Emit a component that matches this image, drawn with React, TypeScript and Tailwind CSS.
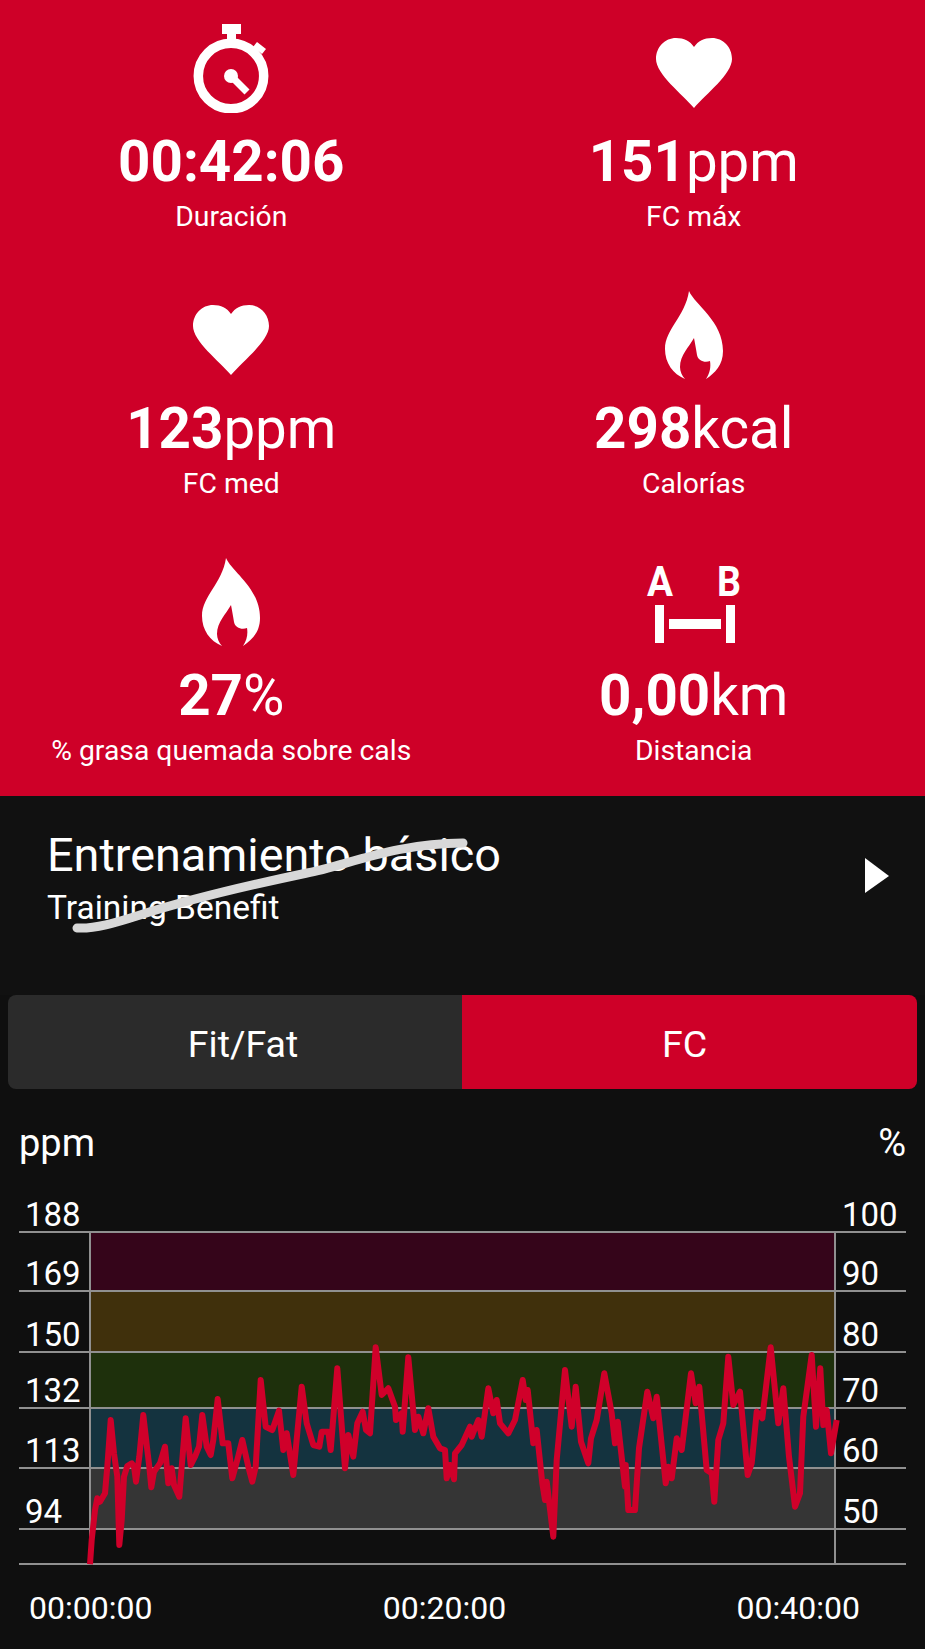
import React from 'react';

const Heart = () => (
  <svg width="76" height="70" viewBox="0 0 76 70" className="mt-[14px] mb-[5px]">
    <path fill="#fff" d="M38 70C26 56 0 36 0 21C0 9 9 0 20 0C28 0 34 3 38 9C42 3 48 0 56 0C67 0 76 9 76 21C76 36 50 56 38 70Z" />
  </svg>
);

const Flame = () => (
  <svg width="58" height="88" viewBox="0 0 58 88" className="mb-px">
    <path fill="#fff" d="M24 0C30 14 58 30 58 60C58 74 50 82 41 88C45 82 46 76 45 70C40 72 33 70 32 64C31 58 30 52 29 47C24 56 15 64 15 76C15 80 17 85 20 88C8 83 0 72 0 58C0 38 20 26 24 0Z" />
  </svg>
);

const Stopwatch = () => (
  <svg width="76" height="89" viewBox="193 24 76 89">
    <rect x="222" y="24" width="19" height="10" fill="#fff" />
    <rect x="227" y="34" width="9" height="9" fill="#fff" />
    <path fill="#fff" d="M257 42L266 49L262 54L253 47Z" />
    <circle cx="231" cy="76" r="32.7" fill="none" stroke="#fff" strokeWidth="9.5" />
    <circle cx="231" cy="76" r="7" fill="#fff" />
    <path d="M231 76L247 92" stroke="#fff" strokeWidth="7" />
  </svg>
);

const Distance = () => (
  <svg width="96" height="89" viewBox="646 558 96 89" className="overflow-visible">
    <text x="647" y="596" fontSize="43" fontWeight="700" fill="#fff" textLength="26" lengthAdjust="spacingAndGlyphs" fontFamily="Roboto, sans-serif">A</text>
    <text x="717" y="596" fontSize="43" fontWeight="700" fill="#fff" textLength="24" lengthAdjust="spacingAndGlyphs" fontFamily="Roboto, sans-serif">B</text>
    <rect x="655" y="605" width="9" height="38" fill="#fff" />
    <rect x="669" y="619" width="52" height="10" fill="#fff" />
    <rect x="726" y="605" width="9" height="38" fill="#fff" />
  </svg>
);

const stats = [
  { icon: <Stopwatch />, bold: '00:42:06', unit: '', label: 'Duración' },
  { icon: <Heart />, bold: '151', unit: 'ppm', label: 'FC máx' },
  { icon: <Heart />, bold: '123', unit: 'ppm', label: 'FC med' },
  { icon: <Flame />, bold: '298', unit: 'kcal', label: 'Calorías' },
  { icon: <Flame />, bold: '27', unit: '%', label: '% grasa quemada sobre cals' },
  { icon: <Distance />, bold: '0,00', unit: 'km', label: 'Distancia' },
];

// traced from the picture, 3x crop coordinates
const leftTrace = [270,1093,275,1020,285,930,292,895,300,905,315,880,322,800,332,660,342,760,352,830,358,1035,365,960,372,830,382,798,395,790,402,800,408,845,418,770,430,645,442,750,448,800,454,862,462,815,480,790,495,740,505,850,515,805,522,855,538,890,545,800,557,655,572,795,585,770,597,740,607,645,620,740,632,765,640,720,653,597,668,730,685,730,697,835,712,780,727,720,745,800,757,845,767,800,782,540,797,680,817,690,837,632,850,750,860,700,880,825,905,560,920,670,940,735,958,740,965,695,985,695,992,750,1012,505,1035,805,1045,705,1060,770,1072,670,1088,635,1098,690,1110,700,1127,442,1145,585,1165,565,1185,620,1188,660,1205,640,1208,695,1225,472,1245,690,1255,650,1270,700,1285,625,1300,710,1320,745,1335,750,1340,835,1350,795,1362,838];
const rightTrace = [0,760,20,735,45,680,50,710,70,660,80,710,100,565,115,640,125,600,135,670,160,700,180,660,203,540,212,600,218,570,235,730,245,690,262,850,270,900,275,845,295,1010,305,780,330,510,350,680,362,560,378,725,400,790,408,715,425,660,448,520,470,640,480,730,488,665,510,860,512,795,520,930,540,930,552,745,577,575,595,655,605,590,632,850,640,800,650,835,665,715,680,750,708,520,722,610,733,560,755,810,770,820,778,905,790,720,805,670,820,470,835,615,855,575,878,825,890,790,905,635,922,655,947,442,970,670,985,565,1002,770,1020,920,1035,880,1045,650,1070,465,1083,680,1096,505,1105,675,1115,630,1128,760,1145,660];

const toPoints = (trace: number[], offsetX: number) => {
  const out: string[] = [];
  for (let i = 0; i < trace.length; i += 2) {
    out.push(`${(offsetX + trace[i] / 3).toFixed(1)},${(1200 + trace[i + 1] / 3).toFixed(1)}`);
  }
  return out.join(' ');
};
const hrLine = `${toPoints(leftTrace, 0)} ${toPoints(rightTrace, 455)}`;

const zones = [
  { left: '169', right: '90', height: 'h-[59px]', band: 'bg-[#35051a]' },
  { left: '150', right: '80', height: 'h-[61px]', band: 'bg-[#40300c]' },
  { left: '132', right: '70', height: 'h-[56px]', band: 'bg-[#1e300c]' },
  { left: '113', right: '60', height: 'h-[60px]', band: 'bg-[#14333f]' },
  { left: '94', right: '50', height: 'h-[61px]', band: 'bg-[#353535]' },
  { left: '', right: '', height: 'h-[35px]', band: 'bg-transparent' },
];

export default function App() {
  return (
    <div className="w-[925px] h-[1649px] overflow-hidden bg-[#0f0f0f] text-white font-['Roboto',sans-serif]">
      {/* Stats */}
      <div className="grid grid-cols-2 h-[796px] bg-[#ce0028] pt-[24px]">
        {stats.map((stat) => (
          <div key={stat.label} className="flex flex-col items-center h-[267px] last:h-auto">
            <div className="h-[89px] flex justify-center items-end">{stat.icon}</div>
            <div className="mt-[16px] text-[56.5px] leading-[66px] whitespace-nowrap">
              <span className="font-bold">{stat.bold}</span>
              {stat.unit}
            </div>
            <div className="mt-[6px] text-[28.3px] leading-[32px] whitespace-nowrap">{stat.label}</div>
          </div>
        ))}
      </div>

      {/* Training benefit */}
      <div className="relative h-[199px] pt-[37px] pl-[47px] bg-[#111111]">
        <div className="text-[46.8px] leading-[44px]">Entrenamiento básico</div>
        <div className="mt-[13px] text-[33.5px] leading-[36px]">Training Benefit</div>
        <svg className="absolute left-0 top-0" width="925" height="199" viewBox="0 796 925 199">
          <path d="M77 928C95 929 115 923 140 915C190 899 250 885 307 873C345 866 395 843 463 843" fill="none" stroke="#d8d8d8" strokeWidth="9" strokeLinecap="round" />
          <path d="M865 858L889 876L865 893Z" fill="#fff" />
        </svg>
      </div>

      {/* Tabs */}
      <div className="mx-[8px] h-[94px] flex rounded-[8px] overflow-hidden text-[37.5px]">
        <div className="w-[454px] bg-[#2b2b2b] flex items-center justify-center pl-[16px] pt-[5px]">Fit/Fat</div>
        <div className="flex-1 bg-[#ce0028] flex items-center justify-center pr-[10px] pt-[5px]">FC</div>
      </div>

      {/* Chart */}
      <div className="flex justify-between items-center mt-[34px] pl-[19px] pr-[19px] h-[40px] text-[38px]">
        <span>ppm</span>
        <span>%</span>
      </div>
      <div className="mx-[19px] mt-[31px] h-[39px] flex border-b-2 border-[#909090] text-[33px] leading-[32px]">
        <div className="w-[70px] pl-[6px] self-end">188</div>
        <div className="flex-1" />
        <div className="w-[70px] pl-[6px] self-end">100</div>
      </div>
      <div className="relative">
        {zones.map((zone) => (
          <div key={zone.left + zone.height} className={`mx-[19px] flex border-b-2 border-[#909090] text-[33px] leading-[32px] ${zone.height}`}>
            <div className="w-[70px] pl-[6px] self-end">{zone.left}</div>
            <div className={`flex-1 border-x-2 border-[#909090] ${zone.band}`} />
            <div className="w-[70px] pl-[6px] self-end">{zone.right}</div>
          </div>
        ))}
        <svg className="absolute left-0 top-0" width="925" height="340" viewBox="0 1233 925 340">
          <polyline points={hrLine} fill="none" stroke="#d0002a" strokeWidth="6" strokeLinejoin="round" />
        </svg>
      </div>

      <div className="flex justify-between pl-[29px] pr-[65px] mt-[24px] text-[32px] leading-[38px]">
        <span>00:00:00</span>
        <span>00:20:00</span>
        <span>00:40:00</span>
      </div>
    </div>
  );
}
